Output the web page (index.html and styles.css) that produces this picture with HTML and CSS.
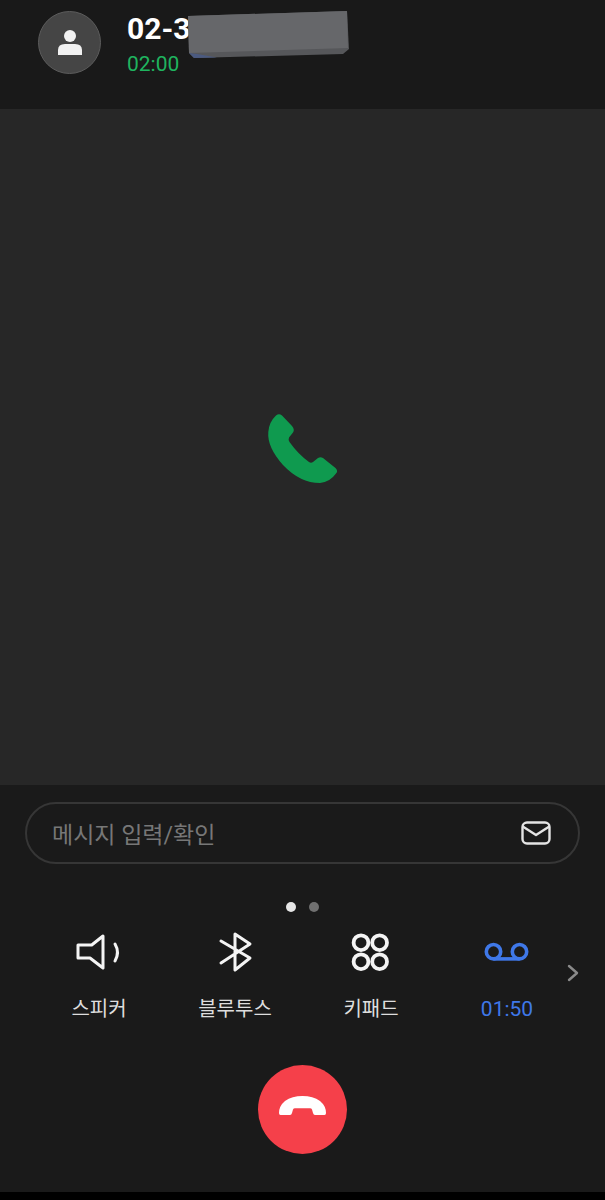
FILE: index.html
```html
<!DOCTYPE html>
<html lang="ko">
    <head>
        <meta charset="UTF-8">
        <meta name="viewport" content="width=device-width, initial-scale=1.0">
        <link rel="stylesheet" href="styles.css">
        <title>통화 중</title>
    </head>
    <body>
        <header class="call-header">
            <div class="avatar">
                <svg class="avatar-icon" viewBox="0 0 28 28" width="28" height="28">
                    <circle cx="14" cy="7" r="6" fill="#f2f2f2"/>
                    <path d="M2 26 V21 Q2 15 9 15 H19 Q26 15 26 21 V26 Z" fill="#f2f2f2"/>
                </svg>
            </div>
            <div class="call-info">
                <div class="call-number">02-3</div>
                <div class="call-time">02:00</div>
            </div>
            <svg class="number-cover" viewBox="0 0 162 48" width="162" height="48">
                <polygon points="1,5 160,0 162,38 156,43 7,47 2,42" fill="#56575a"/>
                <polygon points="2,42 7,47 30,46.4 10,43" fill="#4b5a80"/>
                <polygon points="1,5 160,0 161,37 2,42" fill="#66676a"/>
            </svg>
        </header>

        <main class="call-main">
            <svg viewBox="0 0 85 76" width="85" height="76">
                <path d="M16 4.5 Q19 2 22 4.5 L32 15 Q35 18.5 33 21.5 L29 26.5 Q28 29 29.5 31 Q38 43 49 51 Q51 52.5 53 51 L58 47 Q60.5 45.5 63 47 L75.5 57 Q78.5 60 76 62.5 Q70 71 60 72 Q40 72 23 54 Q7 36 8.3 21 Q9 11 16 4.5 Z" fill="#0f9a4f"/>
            </svg>
        </main>

        <section class="call-panel">
            <div class="message-box">
                <span class="message-text">메시지 입력/확인</span>
                <svg viewBox="0 0 30 24" width="30" height="24" fill="none" stroke="#e4e4e4" stroke-width="2.4" stroke-linejoin="round" stroke-linecap="round">
                    <rect x="1.5" y="1.5" width="27" height="21" rx="4.5"/>
                    <path d="M2.5 6 L15 14 L27.5 6"/>
                </svg>
            </div>

            <div class="page-dots">
                <span class="dot dot-active"></span>
                <span class="dot"></span>
            </div>

            <div class="action-row">
                <div class="action">
                    <svg viewBox="0 0 50 44" width="50" height="44" fill="none" stroke="#f4f4f4" stroke-width="3" stroke-linejoin="round" stroke-linecap="round">
                        <path d="M29 6 L17.7 15 H4 V28 H16 L29 38 Z"/>
                        <path d="M41 14 Q46 22.5 41 31"/>
                    </svg>
                    <span class="action-label">스피커</span>
                </div>
                <div class="action">
                    <svg viewBox="0 0 50 44" width="50" height="44" fill="none" stroke="#f4f4f4" stroke-width="3" stroke-linejoin="round" stroke-linecap="round">
                        <path d="M11 11 L40 28 L25 40 V4 L40 14 L11 33"/>
                    </svg>
                    <span class="action-label">블루투스</span>
                </div>
                <div class="action">
                    <svg viewBox="0 0 50 44" width="50" height="44" fill="none" stroke="#f4f4f4" stroke-width="3.8">
                        <circle cx="15" cy="12.7" r="7.4"/>
                        <circle cx="33.6" cy="12.7" r="7.4"/>
                        <circle cx="15" cy="31.7" r="7.4"/>
                        <circle cx="33.6" cy="31.7" r="7.4"/>
                    </svg>
                    <span class="action-label">키패드</span>
                </div>
                <div class="action action-on">
                    <svg viewBox="0 0 50 44" width="50" height="44" fill="none" stroke="#3f78e8" stroke-width="3.6">
                        <circle cx="11.5" cy="21.7" r="7.2"/>
                        <circle cx="37.5" cy="21.7" r="7.2"/>
                        <path d="M11.5 28.9 H37.5"/>
                    </svg>
                    <span class="action-label">01:50</span>
                </div>
                <svg class="next-page" viewBox="0 0 12 18" width="12" height="18" fill="none" stroke="#8a8a8a" stroke-width="2.4" stroke-linecap="round" stroke-linejoin="round">
                    <path d="M2 2 L10 9 L2 16"/>
                </svg>
            </div>

            <button class="end-button">
                <svg viewBox="0 0 47 20" width="47" height="20">
                    <path d="M1.5 19 Q0 19 0 17 Q0 10 6 5 Q13 0 23.5 0 Q34 0 41 5 Q47 10 47 17 Q47 19 45.5 19 H36 Q34.5 19 34 17 L33 13.5 Q32.5 12.3 31 12.3 H16 Q14.5 12.3 14 13.5 L13 17 Q12.5 19 11 19 Z" fill="#fff"/>
                </svg>
            </button>
        </section>

        <div class="bottom-strip"></div>
    </body>
</html>
```

FILE: styles.css
```css
html,
body {
    height: 100%;
    margin: 0;
}

body {
    display: flex;
    flex-direction: column;
    height: 1200px;
    overflow: hidden;
    background: #1a1a1a;
    font-family: Roboto, "Noto Sans CJK KR", sans-serif;
    position: relative;
}

.call-header {
    display: flex;
    height: 109px;
    padding: 11px 0 0 38px;
    box-sizing: border-box;
    background: #191919;
    position: relative;
}

.avatar {
    display: flex;
    justify-content: center;
    align-items: center;
    width: 63px;
    height: 63px;
    box-sizing: border-box;
    border: 1px solid #5c5c5c;
    border-radius: 50%;
    background: #454545;
}

.call-info {
    margin-left: 26px;
}

.call-number {
    color: #fff;
    font-size: 30px;
    font-weight: 700;
    line-height: 35px;
}

.call-time {
    margin-top: 6px;
    color: #1fb45f;
    font-size: 21px;
    line-height: 24px;
}

.number-cover {
    position: absolute;
    left: 187px;
    top: 11px;
}

.call-main {
    flex: 1;
    display: flex;
    justify-content: center;
    align-items: center;
    padding-top: 4px;
    background: #272727;
}

.call-panel {
    display: flex;
    flex-direction: column;
    height: 407px;
    padding-top: 17px;
    box-sizing: border-box;
    background: #1a1a1a;
}

.message-box {
    display: flex;
    justify-content: space-between;
    align-items: center;
    height: 62px;
    margin: 0 25px;
    padding: 0 27px 0 25px;
    box-sizing: border-box;
    border: 2px solid #363636;
    border-radius: 31px;
}

.message-text {
    color: #777;
    font-size: 23px;
}

.page-dots {
    display: flex;
    justify-content: center;
    gap: 13px;
    margin-top: 38px;
    padding-right: 1px;
}

.dot {
    width: 10px;
    height: 10px;
    border-radius: 50%;
    background: #707070;
}

.dot-active {
    background: #e6e6e6;
}

.action-row {
    display: flex;
    align-items: center;
    margin-top: 18px;
    padding-left: 31px;
}

.action {
    display: flex;
    flex-direction: column;
    align-items: center;
    width: 136px;
}

.action-label {
    margin-top: 21px;
    color: #dedede;
    font-size: 20px;
    line-height: 28px;
}

.action-on .action-label {
    color: #3f78e8;
    font-size: 21px;
}

.next-page {
    margin-left: -8px;
    margin-bottom: 7px;
}

.end-button {
    display: flex;
    justify-content: center;
    align-items: center;
    width: 89px;
    height: 89px;
    margin: 42px auto 0;
    padding: 0 0 7px;
    border: none;
    border-radius: 50%;
    background: #f5404a;
}

.bottom-strip {
    height: 8px;
    background: #000;
}
```
